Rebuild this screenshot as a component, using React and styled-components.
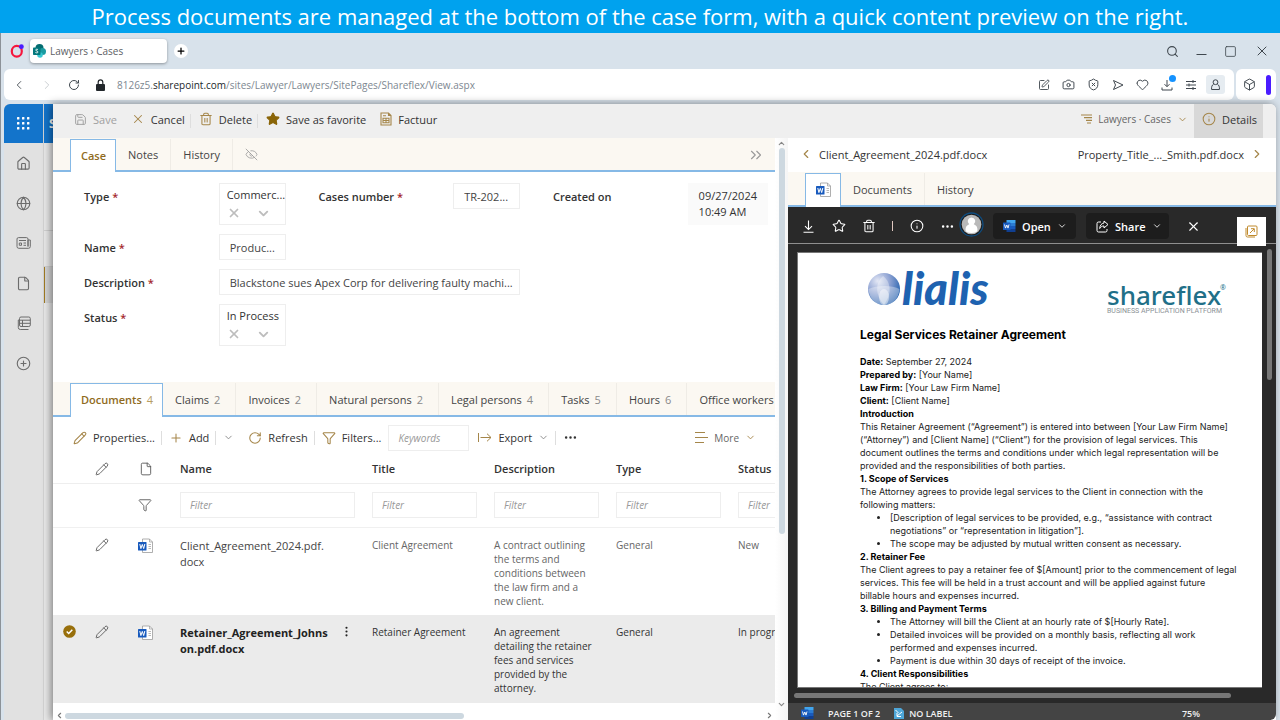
import React from "react";
import styled, { createGlobalStyle } from "styled-components";
import {
  Box,
  Camera,
  ChevronDown,
  ChevronLeft,
  ChevronRight,
  ChevronsRight,
  ChevronUp,
  CirclePlus,
  Ellipsis,
  EllipsisVertical,
  EyeOff,
  File,
  Funnel,
  Globe,
  Heart,
  House,
  Info,
  Pencil,
  Plus,
  RotateCw,
  Save,
  Search,
  ShieldX,
  Square,
  SquarePen,
  Star,
  Trash2,
  X
} from "lucide-react";

const gold = "#a5864a";
const blueLine = "#86b9e6";

const GlobalStyle = createGlobalStyle`
  * {
    box-sizing: border-box;
  }
  body {
    margin: 0;
    font-family: "Open Sans", "Noto Sans", sans-serif;
    font-size: 11px;
    color: #333333;
  }
  button, input, select {
    font: inherit;
    color: inherit;
    margin: 0;
    padding: 0;
    border: none;
    background: none;
    outline: none;
  }
  a {
    color: inherit;
    text-decoration: none;
  }
  svg {
    display: block;
    flex-shrink: 0;
    overflow: visible;
  }
`;

const Page = styled.div`
  display: flex;
  flex-direction: column;
  height: 100vh;
  overflow: hidden;
  background-color: #d8e2eb;
`;

const Banner = styled.h1`
  margin: 0;
  flex-shrink: 0;
  height: 33px;
  line-height: 32px;
  text-align: center;
  white-space: nowrap;
  font-size: 22px;
  font-weight: 400;
  color: #ffffff;
  background-color: #00a2ee;
`;

/* browser frame */

const TabStrip = styled.div`
  display: flex;
  align-items: center;
  flex-shrink: 0;
  height: 36px;
  padding: 0 10px 0 9px;
  border-left: 1px solid #8c9298;
`;

const BrowserTab = styled.button`
  display: flex;
  align-items: center;
  gap: 4px;
  width: 137px;
  height: 24px;
  margin-left: 6px;
  padding-left: 3px;
  border-radius: 4px;
  background-color: #ffffff;
  box-shadow: 0 1px 3px rgba(0, 0, 0, 0.35);
  font-size: 10px;
  color: #5c6064;
`;

const NewTab = styled.button`
  display: grid;
  place-items: center;
  width: 14px;
  height: 14px;
  margin-left: 7px;
  border-radius: 50%;
  color: #000000;
  background-color: #ffffff;
`;

const WindowButtons = styled.div`
  display: flex;
  align-items: center;
  gap: 17px;
  margin-left: auto;
  color: #3f474e;
`;

const AddressRow = styled.div`
  display: flex;
  gap: 2px;
  flex-shrink: 0;
  height: 35px;
  padding: 0 4px 4px 3px;
  border-left: 1px solid #8c9298;
`;

const AddressBar = styled.div`
  display: flex;
  align-items: center;
  flex: 1;
  padding: 0 8px;
  border-radius: 6px;
  background-color: #ffffff;
`;

const AddressExtra = styled.div`
  display: flex;
  align-items: center;
  justify-content: space-between;
  width: 40px;
  padding: 0 5px 0 7px;
  border-radius: 6px;
  color: #3f474e;
  background-color: #ffffff;
`;

const PurpleMark = styled.div`
  width: 5px;
  height: 20px;
  border-radius: 3px;
  background-color: #4a1cff;
`;

const NavButton = styled.button`
  width: 12px;
  margin-right: 16px;
  color: ${props => (props.$faded ? "#c3c8cc" : "#3f474e")};
`;

const Url = styled.a`
  margin-left: 12px;
  flex: 1;
  white-space: nowrap;
  font-size: 10px;
  color: #7d8791;
  b {
    font-weight: 400;
    color: #22272b;
  }
`;

const BrowserTools = styled.div`
  display: flex;
  align-items: center;
  gap: 12px;
  color: #3f474e;
`;

const DownloadButton = styled.button`
  position: relative;
`;

const BlueDot = styled.span`
  position: absolute;
  right: -3px;
  top: -4px;
  width: 7px;
  height: 7px;
  border-radius: 50%;
  background-color: #1592ff;
`;

const Profile = styled.button`
  display: grid;
  place-items: center;
  width: 19px;
  height: 19px;
  margin: 0 1px 0 -3px;
  border-radius: 3px;
  background-color: #e6ecf1;
`;

/* SharePoint page */

const Main = styled.div`
  display: flex;
  flex: 1;
  min-height: 0;
  padding: 0 4px 0 3px;
  border-left: 1px solid #8c9298;
`;

const Rail = styled.nav`
  display: flex;
  flex-direction: column;
  flex-shrink: 0;
  width: 39px;
  color: #6c6c6c;
  background-color: #e1e1e1;
`;

const Waffle = styled.button`
  display: grid;
  place-items: center;
  height: 39px;
  border-radius: 6px 0 0 0;
  background-color: #1374cb;
`;

const RailButton = styled.button`
  display: grid;
  place-items: center;
  height: 40px;
`;

const Gutter = styled.div`
  display: flex;
  flex-direction: column;
  flex-shrink: 0;
  width: 10px;
  overflow: hidden;
  border-left: 1px solid #d2d2d2;
  background-color: #e8e8e8;
`;

const GutterHead = styled.div`
  height: 39px;
  margin-left: -1px;
  padding-left: 6px;
  line-height: 38px;
  font-size: 13px;
  font-weight: 700;
  color: #ffffff;
  background-color: #1374cb;
`;

const GutterSpace = styled.div`
  height: ${props => props.$height}px;
  border-bottom: 1px solid #d0d0d0;
`;

const GutterMark = styled.div`
  height: 36px;
  margin-left: -1px;
  border-left: 2px solid #a07a20;
  background-color: #d6d6d6;
`;

const Panel = styled.main`
  display: flex;
  flex-direction: column;
  flex: 1;
  min-width: 0;
  position: relative;
  border-radius: 0 6px 0 0;
  background-color: #ffffff;
  box-shadow: -2px 0 9px rgba(0, 0, 0, 0.45);
`;

const TopBar = styled.div`
  display: flex;
  flex-shrink: 0;
  height: 34px;
  padding: 0 13px;
  border-radius: 0 6px 0 0;
  background-color: #efefef;
`;

const ToolButton = styled.button`
  display: flex;
  align-items: center;
  gap: 6px;
  padding: 0 6px 4px 8px;
  white-space: nowrap;
  position: relative;
  font-size: ${props => (props.$small ? 10 : 11)}px;
  color: ${props => props.$color || "#333333"};
  background-color: ${props => (props.$active ? "#d8d8d8" : "transparent")};
  svg {
    color: ${props => props.$icon || gold};
  }
  &::after {
    content: "";
    display: ${props => (props.$divided ? "block" : "none")};
    position: absolute;
    right: 0;
    top: 50%;
    height: 14px;
    margin-top: -7px;
    border-right: 1px solid #dedede;
  }
`;

const Spacer = styled.div`
  flex: 1;
`;

const Columns = styled.div`
  display: flex;
  flex: 1;
  min-height: 0;
`;

const CaseColumn = styled.section`
  display: flex;
  flex: 1;
  min-width: 0;
`;

const CaseBody = styled.div`
  display: flex;
  flex-direction: column;
  flex: 1;
  min-width: 0;
`;

const Tabs = styled.div`
  display: flex;
  flex-shrink: 0;
  height: ${props => props.$height || 34}px;
  padding: 1px 0 0 17px;
  overflow: hidden;
  box-shadow: inset 0 -2px 0 ${blueLine};
  background-color: #fbf8f2;
`;

const Tab = styled.button`
  display: flex;
  align-items: center;
  flex-shrink: 0;
  gap: 5px;
  padding: 0 ${props => props.$end || 12}px 0 12px;
  white-space: nowrap;
  border-right: 1px solid ${props => (props.$last ? "transparent" : "#efece6")};
  margin-bottom: 2px;
  color: #444444;
  svg {
    color: #999999;
  }
  span {
    color: #8a8a8a;
  }
`;

const ActiveTab = styled(Tab)`
  padding: 0 9px 2px 10px;
  margin: 0;
  border: 1px solid ${blueLine};
  border-bottom: none;
  font-weight: 600;
  color: #8f6b1d;
  background-color: #ffffff;
  span {
    font-weight: 400;
    color: #b79d63;
  }
`;

const Form = styled.form`
  display: grid;
  grid-template-columns: 135fr 67fr 33fr 135fr 67fr 33fr 135fr 80fr;
  grid-auto-rows: min-content;
  row-gap: 9px;
  flex-shrink: 0;
  height: 210px;
  padding: 11px 7px 0 31px;
`;

const Label = styled.label`
  grid-column: ${props => props.$column || 1};
  padding-top: 6px;
  font-weight: 600;
  line-height: 15px;
  color: #333333;
  em {
    color: #a4262c;
    font-style: normal;
  }
`;

const Field = styled.input`
  grid-column: ${props => props.$column || 2};
  align-self: start;
  min-width: 0;
  width: 100%;
  height: 26px;
  padding-left: 10px;
  border: 1px solid #eeeeee;
  text-overflow: ellipsis;
  color: #444444;
`;

const Choice = styled.div`
  display: grid;
  grid-template-columns: 1fr 1fr;
  align-content: start;
  height: 42px;
  padding: 2px 0 0 7px;
  overflow: hidden;
  border: 1px solid #eeeeee;
  color: #bdbdbd;
  select {
    grid-column: 1 / 3;
    width: 100%;
    height: 16px;
    appearance: none;
    color: #333333;
  }
  button {
    height: 22px;
  }
`;

const Stamp = styled.output`
  grid-column: 8;
  padding: 5px 11px;
  line-height: 16px;
  white-space: nowrap;
  background-color: #fafafa;
`;

const ListBar = styled.div`
  display: flex;
  align-items: center;
  flex-shrink: 0;
  height: 41px;
  padding: 0 12px 0 13px;
`;

const ListButton = styled(ToolButton)`
  height: 28px;
  padding: 0 7px;
`;

const Keywords = styled.input`
  width: 81px;
  height: 26px;
  margin-right: 2px;
  padding-left: 9px;
  border: 1px solid #eeeeee;
  font-size: 10px;
  font-style: italic;
  &::placeholder {
    color: #999999;
  }
`;

const TableWrap = styled.div`
  flex: 1;
  min-height: 0;
  overflow: hidden;
`;

const Table = styled.table`
  width: 799px;
  table-layout: fixed;
  border-collapse: collapse;
`;

const HeadCell = styled.th`
  height: 25px;
  padding: 0 8px;
  text-align: left;
  vertical-align: top;
  line-height: 22px;
  font-weight: 600;
  border-bottom: 1px solid #eeeeee;
  svg {
    margin: 4px auto 0;
    color: #555555;
  }
`;

const FilterCell = styled.td`
  height: 44px;
  padding: 0 9px 0 8px;
  border-bottom: 1px solid #f0f0f0;
  svg {
    margin: 0 auto;
    color: #555555;
  }
`;

const FilterInput = styled.input`
  width: 100%;
  height: 26px;
  padding-left: 9px;
  border: 1px solid #eeeeee;
  font-size: 10px;
  font-style: italic;
  &::placeholder {
    color: #999999;
  }
`;

const Row = styled.tr`
  height: 88px;
  font-weight: ${props => (props.$selected ? 700 : 400)};
  color: ${props => (props.$selected ? "#222222" : "#444444")};
  background-color: ${props => (props.$selected ? "#ebebeb" : "#ffffff")};
`;

const Cell = styled.td`
  padding: ${props => (props.$icon ? "10px 0 0" : "10px 8px 0")};
  vertical-align: top;
  font-size: 10px;
  line-height: 14px;
  white-space: nowrap;
  font-weight: 400;
  color: ${props => (props.$dark ? "#333333" : "#666666")};
  svg {
    margin: 0 auto;
    color: #555555;
  }
`;

const NameCell = styled.td`
  padding: 10px 8px 0;
  vertical-align: top;
  line-height: 16px;
  white-space: nowrap;
`;

const NameRow = styled.div`
  display: flex;
  justify-content: space-between;
  padding-right: 3px;
`;

const HScroll = styled.div`
  display: flex;
  align-items: center;
  flex-shrink: 0;
  height: 17px;
  padding: 8px 1px 0 2px;
  color: #777777;
`;

const HTrack = styled.div`
  flex: 1;
  margin-left: 1px;
`;

const HThumb = styled.div`
  width: 57%;
  height: 6px;
  border-radius: 3px;
  background-color: #cdd8e0;
`;

const VScroll = styled.div`
  display: flex;
  flex-direction: column;
  align-items: center;
  justify-content: space-between;
  width: 13px;
  padding: 1px 0 11px;
  color: #888888;
  background: linear-gradient(to right, #ffffff, #f5f5f5);
`;

const VTrack = styled.div`
  flex: 1;
`;

const VThumb = styled.div`
  width: 6px;
  height: 70%;
  border-radius: 3px;
  background-color: #cdd8e0;
`;

/* preview */

const Preview = styled.section`
  display: flex;
  flex-direction: column;
  flex: 0 0 488px;
  min-width: 0;
  position: relative;
`;

const PreviewNav = styled.div`
  display: flex;
  align-items: center;
  justify-content: space-between;
  flex-shrink: 0;
  height: 34px;
  padding: 0 12px 2px 11px;
  background-color: #ffffff;
  a {
    display: flex;
    align-items: center;
    gap: 6px;
  }
  svg {
    color: ${gold};
  }
`;

const DarkBar = styled.div`
  display: flex;
  align-items: center;
  flex-shrink: 0;
  height: 37px;
  padding: 2px 15px 0 14px;
  border-bottom: 1px solid #8f8f8f;
  color: #ffffff;
  background-color: #292929;
`;

const DarkIcon = styled.button`
  display: grid;
  place-items: center;
  width: 13px;
  height: 20px;
  margin-right: ${props => props.$end || 17}px;
`;

const Bar = styled.span`
  width: 1px;
  height: 10px;
  margin-right: 17px;
  background-color: #e0c8c0;
`;

const DarkButton = styled.button`
  display: flex;
  align-items: center;
  gap: 6px;
  width: 83px;
  height: 26px;
  margin-right: 10px;
  padding-left: 10px;
  border-radius: 4px;
  font-weight: 600;
  background-color: #1d1d1d;
`;

const AvatarButton = styled.button`
  margin: 0 9px 4px 0;
`;

const Popout = styled.button`
  position: absolute;
  right: 10px;
  top: 79px;
  display: grid;
  place-items: center;
  width: 29px;
  height: 29px;
  color: #c08a2c;
  background-color: #ffffff;
`;

const Viewer = styled.div`
  display: flex;
  flex: 1;
  min-height: 0;
  padding: 8px 4px 0 9px;
  background-color: #292929;
`;

const Paper = styled.article`
  flex: 1;
  min-width: 0;
  overflow: hidden;
  padding: 16px 20px 0 62px;
  white-space: nowrap;
  border: 1px solid #777777;
  border-right: none;
  font-family: Inter, "Liberation Sans", sans-serif;
  font-size: 9px;
  line-height: 13px;
  color: #222222;
  background-color: #ffffff;
  b {
    color: #000000;
  }
  p {
    margin: 0;
  }
  h2 {
    margin: 9px 0 13px;
    font-size: 12px;
    line-height: 14px;
    color: #000000;
  }
  h3 {
    margin: 0;
    font-size: 9px;
    line-height: 13px;
    color: #000000;
  }
  ul {
    margin: 0;
    padding-left: 30px;
  }
`;

const Logos = styled.div`
  display: flex;
  justify-content: space-between;
  margin-right: 15px;
`;

const ViewerScroll = styled.div`
  width: 5px;
  height: 131px;
  margin: -3px 0 0 5px;
  border-radius: 3px;
  background-color: #777777;
`;

const ViewerHScroll = styled.div`
  flex-shrink: 0;
  height: 15px;
  padding: 5px 45px 0 6px;
  background-color: #292929;
  div {
    height: 5px;
    border-radius: 3px;
    background-color: #777777;
  }
`;

const StatusBar = styled.div`
  display: flex;
  align-items: center;
  flex-shrink: 0;
  height: 17px;
  padding: 3px 76px 0 13px;
  font-size: 9px;
  font-weight: 600;
  color: #f0f0f0;
  background-color: #444444;
  border-radius: 0 0 6px 0;
  svg {
    margin-right: 5px;
  }
  span {
    margin: 0 14px 0 9px;
  }
`;

const WordFile = () => (
  <svg width="15" height="15" viewBox="0 0 15 15" aria-hidden="true">
    <path d="M4.5 1h7l3 3v10.5h-10z" fill="#ffffff" stroke="#9a9a9a" strokeWidth="0.8" />
    <path d="M11.5 1v3h3M10.5 6.5h2.5M10.5 8.5h2.5M10.5 10.5h2.5" fill="none" stroke="#9a9a9a" strokeWidth="0.7" />
    <rect x="0" y="4" width="8.5" height="8.5" rx="0.6" fill="#185abd" />
    <path d="M1.8 6l1.1 4.6L4.3 6.4l1.4 4.2L6.8 6" fill="none" stroke="#ffffff" strokeWidth="1" />
  </svg>
);

const WordLogo = () => (
  <svg width="13" height="12" viewBox="0 0 13 12" aria-hidden="true">
    <path d="M3.5 0h9v3h-9z" fill="#41a5ee" />
    <path d="M3.5 3h9v3h-9z" fill="#2b7cd3" />
    <path d="M3.5 6h9v3h-9z" fill="#185abd" />
    <path d="M3.5 9h9v3h-9z" fill="#103f91" />
    <rect y="2.5" width="7.5" height="7.5" rx="0.6" fill="#185abd" />
    <path d="M1.5 4.5l1 3.6L3.8 5l1.2 3.1 1-3.6" fill="none" stroke="#ffffff" strokeWidth="0.9" />
  </svg>
);

const OperaIcon = () => (
  <svg width="14" height="14" viewBox="0 0 14 14">
    <ellipse cx="6.8" cy="7.2" rx="5" ry="5.4" fill="none" stroke="#f5173d" strokeWidth="2.2" />
    <circle cx="11.4" cy="2.7" r="2.4" fill="#4a1cff" />
  </svg>
);

const SharePointIcon = () => (
  <svg width="13" height="14" viewBox="0 0 13 14">
    <circle cx="6.5" cy="4" r="4" fill="#036c70" />
    <circle cx="9.5" cy="7.5" r="3.5" fill="#1a9ba1" />
    <circle cx="7" cy="11" r="2.8" fill="#37c6d0" />
    <rect y="3.5" width="7.5" height="7.5" rx="0.8" fill="#03787c" />
    <path d="M5 5.6C4 5 2.6 5.2 2.7 6.1c.1 1 2.3.8 2.3 1.9 0 1-1.5 1.1-2.6.5" fill="none" stroke="#fff" strokeWidth="0.9" />
  </svg>
);

const LockIcon = () => (
  <svg width="9" height="12" viewBox="0 0 9 12">
    <rect y="5" width="9" height="7" rx="1" fill="#22272b" />
    <path d="M2.2 5V3.2a2.3 2.3 0 0 1 4.6 0V5" fill="none" stroke="#22272b" strokeWidth="1.2" />
  </svg>
);

const WaffleIcon = () => (
  <svg width="13" height="13" viewBox="0 0 13 13" fill="#ffffff">
    {[0, 5, 10].map(y =>
      [0, 5, 10].map(x => <rect key={x + "-" + y} x={x} y={y} width="2.4" height="2.4" rx="0.5" />)
    )}
  </svg>
);

const NewsIcon = () => (
  <svg width="15" height="12" viewBox="0 0 15 12" fill="none" stroke="currentColor">
    <path d="M12 9.5V2A1.5 1.5 0 0 0 10.5 0.6h-8A1.5 1.5 0 0 0 1 2v7.5a1.8 1.8 0 0 0 1.8 1.8h9.7a1.8 1.8 0 0 0 1.8-1.8V3H12M12 3v6.5" />
    <path d="M3 3.5h7M7.5 6h2.5M7.5 8.3h2.5M3.3 6h2.2v2.3H3.3z" />
  </svg>
);

const SendIcon = () => (
  <svg width="12" height="12" viewBox="0 0 12 12" fill="none" stroke="currentColor" strokeLinejoin="round">
    <path d="M1.5 1.5L11 6 1.5 10.5 3.5 6z" />
  </svg>
);

const DownloadIcon = () => (
  <svg width="13" height="13" viewBox="0 0 13 13" fill="none" stroke="currentColor" strokeWidth="1.1">
    <path d="M6.5 0.5v9M3 6.2l3.5 3.4L10 6.2M1.5 12.3h10" />
  </svg>
);

const TrayIcon = () => (
  <svg width="12" height="12" viewBox="0 0 12 12" fill="none" stroke="currentColor">
    <path d="M6 1v6.500M3.500 5.200L6 7.700l2.500-2.500M1 8.500v2.500h10V8.500" />
  </svg>
);

const SlidersIcon = () => (
  <svg width="12" height="12" viewBox="0 0 12 12" fill="none" stroke="currentColor">
    <path d="M1 2.5h10M1 6h10M1 9.5h10M8 1v3M4 4.5v3M8 8v3" />
  </svg>
);

const PersonIcon = () => (
  <svg width="11" height="12" viewBox="0 0 11 12" fill="none" stroke="currentColor">
    <circle cx="5.5" cy="3.2" r="2.4" />
    <path d="M3.7 5C2 6 1.3 8 1.6 10.5h7.8C9.7 8 9 6 7.3 5" />
  </svg>
);

const RowsIcon = () => (
  <svg width="14" height="14" viewBox="0 0 14 14" fill="none" stroke="currentColor">
    <rect x="2.5" y="1" width="10.8" height="9.5" rx="1.5" />
    <path d="M2.5 4h-1.2v7.5a2 2 0 0 0 2 2h8.2M2.5 4.2h10.8M2.5 7.3h10.8M5.5 4v6.5" />
  </svg>
);

const SortIcon = () => (
  <svg width="11" height="10" viewBox="0 0 11 10" fill="none" stroke="currentColor" strokeWidth="1.2">
    <path d="M0 1h11M3 3.7h8M5 6.4h6M6 9h4" />
  </svg>
);

const MoreIcon = () => (
  <svg width="13" height="13" viewBox="0 0 13 13" fill="none" stroke="currentColor">
    <path d="M0 1.5h10M0 6.5h13M0 11.5h9" />
  </svg>
);

const ExportIcon = () => (
  <svg width="14" height="11" viewBox="0 0 14 11" fill="none" stroke="currentColor">
    <path d="M0.5 1v9M2.5 5.5h10.5M9 1.7l4 3.8-4 3.8" />
  </svg>
);

const InvoiceIcon = () => (
  <svg width="12" height="14" viewBox="0 0 12 14" fill="none" stroke="currentColor" strokeWidth="1.1">
    <path d="M1 1h7.5L11 3.5V13H1zM8.5 1v2.5H11M3 6.2h6v4.6H3zM3 8.5h6M6 6.2v4.6M3 3.8h3" />
  </svg>
);

const ShareIcon = () => (
  <svg width="13" height="13" viewBox="0 0 13 13" fill="none" stroke="currentColor">
    <path d="M5 2H2.5A1.5 1.5 0 0 0 1 3.5v7A1.5 1.5 0 0 0 2.5 12h7a1.5 1.5 0 0 0 1.5-1.5V9" />
    <path d="M8 1l4 3.5L8 8V6C6 6 4.7 6.8 3.7 8.5 3.9 5.5 5.5 3.3 8 3z" />
  </svg>
);

const PopoutIcon = () => (
  <svg width="13" height="13" viewBox="0 0 13 13" fill="none" stroke="currentColor">
    <rect x="2.5" y="1" width="9.5" height="9.5" rx="1" />
    <path d="M1 3v7.5A1.5 1.5 0 0 0 2.5 12H10M5 8l4-4M6 3.7h3.3V7" />
  </svg>
);

const CheckedIcon = () => (
  <svg width="13" height="13" viewBox="0 0 13 13">
    <circle cx="6.5" cy="6.5" r="6.3" fill="#986f0b" />
    <path d="M3.7 6.5l2 2 3.6-3.8" fill="none" stroke="#ffffff" strokeWidth="1.5" />
  </svg>
);

const LabelIcon = () => (
  <svg width="10" height="11" viewBox="0 0 10 11">
    <path d="M0 0h7l3 3v8H0z" fill="#4ea6d8" />
    <path d="M1.5 2l3 3M3 8l5-4M3 5v3.5h4" fill="none" stroke="#ffffff" />
  </svg>
);

const Avatar = () => (
  <svg width="25" height="25" viewBox="0 0 25 25">
    <circle cx="12.5" cy="12.5" r="11.5" fill="#1d1d1d" stroke="#0f4d80" strokeWidth="1.3" />
    <circle cx="12.5" cy="12.5" r="9.8" fill="#b9b9b9" />
    <path d="M12.5 5.5a3.8 3.8 0 0 1 2.3 6.8c2.5 1 3.7 2.7 3.7 5.7 0 2-2 3-6 3s-6-1-6-3c0-3 1.2-4.7 3.7-5.7a3.8 3.8 0 0 1 2.3-6.8z" fill="#ffffff" />
  </svg>
);

const LialisLogo = () => (
  <svg width="140" height="50" viewBox="0 0 140 50">
    <defs>
      <radialGradient id="ball" cx="0.3" cy="0.25" r="0.85">
        <stop offset="0" stopColor="#e4e8f5" />
        <stop offset="0.45" stopColor="#8fa3d3" />
        <stop offset="1" stopColor="#1557a8" />
      </radialGradient>
    </defs>
    <circle cx="24" cy="20" r="16" fill="url(#ball)" />
    <path d="M8.5 20c8-4 24-4 31 0-1 10-7 16-15.500 16S9.5 30 8.5 20z" fill="#ffffff" opacity="0.35" />
    <path d="M23 7c7 5 10 16 1 29-9-10-9-22-1-29z" fill="#ffffff" opacity="0.35" />
    <ellipse cx="24" cy="28" rx="5" ry="8" fill="#ffffff" opacity="0.45" />
    <text x="42" y="36" fontFamily="Lato, sans-serif" fontSize="45" fontWeight="900" fontStyle="italic" fill="#1e62b0">
      lialis
    </text>
  </svg>
);

const ShareflexLogo = () => (
  <svg width="120" height="50" viewBox="0 0 120 50">
    <text x="0" y="36" fontFamily="Noto Sans, sans-serif" fontSize="26" fontWeight="500" fill="#216f88">
      shareflex
    </text>
    <text x="113" y="21" fontFamily="Noto Sans, sans-serif" fontSize="7" fill="#216f88">
      ®
    </text>
    <text x="0" y="44" fontFamily="Roboto, sans-serif" fontSize="7" fill="#8b9196">
      BUSINESS APPLICATION PLATFORM
    </text>
  </svg>
);

const relatedTabs = [
  ["Claims", 2],
  ["Invoices", 2],
  ["Natural persons", 2],
  ["Legal persons", 4],
  ["Tasks", 5],
  ["Hours", 6]
];

const filters = ["Name", "Title", "Description", "Type", "Status"];

const documents = [
  {
    name: ["Client_Agreement_2024.pdf.", "docx"],
    title: "Client Agreement",
    description: ["A contract outlining", "the terms and", "conditions between", "the law firm and a", "new client."],
    type: "General",
    status: "New"
  },
  {
    name: ["Retainer_Agreement_Johns", "on.pdf.docx"],
    title: "Retainer Agreement",
    description: ["An agreement", "detailing the retainer", "fees and services", "provided by the", "attorney."],
    type: "General",
    status: "In progress",
    selected: true
  }
];

const Lines = ({ items }) =>
  items.map(line => (
    <React.Fragment key={line}>
      {line}
      <br />
    </React.Fragment>
  ));

const ChoiceField = ({ id, value }) => (
  <Choice>
    <select id={id} defaultValue={value}>
      <option>{value}</option>
    </select>
    <button type="button" aria-label="Clear">
      <X size={14} strokeWidth={3} />
    </button>
    <button type="button" aria-label="Open list">
      <ChevronDown size={15} strokeWidth={3} />
    </button>
  </Choice>
);

const Browser = () => (
  <>
    <TabStrip>
      <OperaIcon />
      <BrowserTab>
        <SharePointIcon />
        Lawyers › Cases
      </BrowserTab>
      <NewTab aria-label="New tab">
        <Plus size={10} strokeWidth={3} />
      </NewTab>
      <WindowButtons>
        <button aria-label="Search">
          <Search size={13} strokeWidth={2} />
        </button>
        <button aria-label="Minimize">
          <svg width="11" height="12" viewBox="0 0 11 12">
            <path d="M0.5 9.5h10" stroke="currentColor" />
          </svg>
        </button>
        <button aria-label="Maximize">
          <Square size={13} strokeWidth={1.5} />
        </button>
        <button aria-label="Close">
          <X size={16} strokeWidth={1.5} />
        </button>
      </WindowButtons>
    </TabStrip>
    <AddressRow>
      <AddressBar>
        <NavButton aria-label="Back">
          <ChevronLeft size={14} strokeWidth={1.5} />
        </NavButton>
        <NavButton aria-label="Forward" $faded>
          <ChevronRight size={14} strokeWidth={1.5} />
        </NavButton>
        <NavButton aria-label="Reload">
          <RotateCw size={12} strokeWidth={2} />
        </NavButton>
        <LockIcon />
        <Url href="#">
          8126z5.<b>sharepoint.com</b>/sites/Lawyer/Lawyers/SitePages/Shareflex/View.aspx
        </Url>
        <BrowserTools>
          <SquarePen size={12} strokeWidth={1.8} />
          <Camera size={13} strokeWidth={1.8} />
          <ShieldX size={13} strokeWidth={1.8} />
          <SendIcon />
          <Heart size={13} strokeWidth={1.8} />
          <DownloadButton aria-label="Downloads">
            <TrayIcon />
            <BlueDot />
          </DownloadButton>
          <SlidersIcon />
          <Profile aria-label="Profile">
            <PersonIcon />
          </Profile>
        </BrowserTools>
      </AddressBar>
      <AddressExtra>
        <Box size={13} strokeWidth={1.8} />
        <PurpleMark />
      </AddressExtra>
    </AddressRow>
  </>
);

const CaseForm = () => (
  <Form>
    <Label htmlFor="type">
      Type <em>*</em>
    </Label>
    <ChoiceField id="type" value="Commerc..." />
    <Label htmlFor="number" $column={4}>
      Cases number <em>*</em>
    </Label>
    <Field id="number" $column={5} defaultValue="TR-202..." />
    <Label htmlFor="created" $column={7}>
      Created on
    </Label>
    <Stamp id="created">
      09/27/2024
      <br />
      10:49 AM
    </Stamp>
    <Label htmlFor="name">
      Name <em>*</em>
    </Label>
    <Field id="name" defaultValue="Produc..." />
    <Label htmlFor="description">
      Description <em>*</em>
    </Label>
    <Field id="description" $column="2 / span 4" defaultValue="Blackstone sues Apex Corp for delivering faulty machi..." />
    <Label htmlFor="status">
      Status <em>*</em>
    </Label>
    <ChoiceField id="status" value="In Process" />
  </Form>
);

const DocumentTable = () => (
  <TableWrap>
    <Table>
      <colgroup>
        {[32, 34, 53, 192, 122, 122, 122, 122].map((width, i) => (
          <col key={i} width={width} />
        ))}
      </colgroup>
      <thead>
        <tr>
          <HeadCell />
          <HeadCell>
            <Pencil size={14} strokeWidth={1.5} />
          </HeadCell>
          <HeadCell>
            <File size={14} strokeWidth={1.5} />
          </HeadCell>
          {filters.map(name => (
            <HeadCell key={name}>{name}</HeadCell>
          ))}
        </tr>
      </thead>
      <tbody>
        <tr>
          <FilterCell colSpan={2} />
          <FilterCell>
            <Funnel size={14} strokeWidth={1.5} />
          </FilterCell>
          {filters.map(name => (
            <FilterCell key={name}>
              <FilterInput placeholder="Filter" aria-label={"Filter " + name} />
            </FilterCell>
          ))}
        </tr>
        {documents.map(doc => (
          <Row key={doc.title} $selected={doc.selected}>
            <Cell $icon>{doc.selected && <CheckedIcon />}</Cell>
            <Cell $icon>
              <Pencil size={14} strokeWidth={1.5} />
            </Cell>
            <Cell $icon>
              <WordFile />
            </Cell>
            <NameCell>
              <NameRow>
                <div>
                  <Lines items={doc.name} />
                </div>
                {doc.selected && <EllipsisVertical size={13} />}
              </NameRow>
            </NameCell>
            <Cell $dark={doc.selected}>{doc.title}</Cell>
            <Cell $dark={doc.selected}>
              <Lines items={doc.description} />
            </Cell>
            <Cell $dark={doc.selected}>{doc.type}</Cell>
            <Cell $dark={doc.selected}>{doc.status}</Cell>
          </Row>
        ))}
      </tbody>
    </Table>
  </TableWrap>
);

const Agreement = () => (
  <Paper>
    <Logos>
      <LialisLogo />
      <ShareflexLogo />
    </Logos>
    <h2>Legal Services Retainer Agreement</h2>
    <p>
      <b>Date:</b> September 27, 2024
      <br />
      <b>Prepared by:</b> [Your Name]
      <br />
      <b>Law Firm:</b> [Your Law Firm Name]
      <br />
      <b>Client:</b> [Client Name]
    </p>
    <h3>Introduction</h3>
    <p>
      This Retainer Agreement (“Agreement”) is entered into between [Your Law Firm Name]
      <br />
      (“Attorney”) and [Client Name] (“Client”) for the provision of legal services. This
      <br />
      document outlines the terms and conditions under which legal representation will be
      <br />
      provided and the responsibilities of both parties.
    </p>
    <h3>1. Scope of Services</h3>
    <p>
      The Attorney agrees to provide legal services to the Client in connection with the
      <br />
      following matters:
    </p>
    <ul>
      <li>
        [Description of legal services to be provided, e.g., “assistance with contract
        <br />
        negotiations” or “representation in litigation”].
      </li>
      <li>The scope may be adjusted by mutual written consent as necessary.</li>
    </ul>
    <h3>2. Retainer Fee</h3>
    <p>
      The Client agrees to pay a retainer fee of $[Amount] prior to the commencement of legal
      <br />
      services. This fee will be held in a trust account and will be applied against future
      <br />
      billable hours and expenses incurred.
    </p>
    <h3>3. Billing and Payment Terms</h3>
    <ul>
      <li>The Attorney will bill the Client at an hourly rate of $[Hourly Rate].</li>
      <li>
        Detailed invoices will be provided on a monthly basis, reflecting all work
        <br />
        performed and expenses incurred.
      </li>
      <li>Payment is due within 30 days of receipt of the invoice.</li>
    </ul>
    <h3>4. Client Responsibilities</h3>
    <p>The Client agrees to:</p>
  </Paper>
);

const App = () => (
  <Page>
    <GlobalStyle />
    <Banner>Process documents are managed at the bottom of the case form, with a quick content preview on the right.</Banner>
    <Browser />
    <Main>
      <Rail>
        <Waffle aria-label="App launcher">
          <WaffleIcon />
        </Waffle>
        <RailButton aria-label="Home">
          <House size={15} strokeWidth={1.8} />
        </RailButton>
        <RailButton aria-label="Sites">
          <Globe size={15} strokeWidth={1.8} />
        </RailButton>
        <RailButton aria-label="News">
          <NewsIcon />
        </RailButton>
        <RailButton aria-label="Files">
          <File size={15} strokeWidth={1.8} />
        </RailButton>
        <RailButton aria-label="Lists">
          <RowsIcon />
        </RailButton>
        <RailButton aria-label="Create">
          <CirclePlus size={15} strokeWidth={1.8} />
        </RailButton>
      </Rail>
      <Gutter>
        <GutterHead>S</GutterHead>
        <GutterSpace $height={88} />
        <GutterSpace $height={36} />
        <GutterMark />
      </Gutter>
      <Panel>
        <TopBar>
          <ToolButton $color="#a0a0a0" $icon="#a0a0a0">
            <Save size={13} strokeWidth={1.8} />
            Save
          </ToolButton>
          <ToolButton $divided>
            <X size={14} strokeWidth={1.8} />
            Cancel
          </ToolButton>
          <ToolButton $divided>
            <Trash2 size={14} strokeWidth={1.8} />
            Delete
          </ToolButton>
          <ToolButton $icon="#8a6508">
            <Star size={14} fill="currentColor" />
            Save as favorite
          </ToolButton>
          <ToolButton>
            <InvoiceIcon />
            Factuur
          </ToolButton>
          <Spacer />
          <ToolButton $small $color="#666666">
            <SortIcon />
            Lawyers · Cases
            <ChevronDown size={11} />
          </ToolButton>
          <ToolButton $active>
            <Info size={14} strokeWidth={1.8} />
            Details
          </ToolButton>
        </TopBar>
        <Columns>
          <CaseColumn>
            <CaseBody>
              <Tabs>
                <ActiveTab>Case</ActiveTab>
                <Tab>Notes</Tab>
                <Tab>History</Tab>
                <Tab $last aria-label="Hidden tabs">
                  <EyeOff size={13} strokeWidth={1.5} />
                </Tab>
                <Spacer />
                <Tab $last $end={9} aria-label="Collapse">
                  <ChevronsRight size={18} strokeWidth={1.5} />
                </Tab>
              </Tabs>
              <CaseForm />
              <Tabs $height={35}>
                <ActiveTab>
                  Documents <span>4</span>
                </ActiveTab>
                {relatedTabs.map(([name, count]) => (
                  <Tab key={name} $end={15}>
                    {name} <span>{count}</span>
                  </Tab>
                ))}
                <Tab $last $end={1}>
                  Office workers
                </Tab>
              </Tabs>
              <ListBar>
                <ListButton $divided>
                  <Pencil size={14} strokeWidth={1.8} />
                  Properties...
                </ListButton>
                <ListButton $divided>
                  <Plus size={14} strokeWidth={1.8} />
                  Add
                </ListButton>
                <ListButton $icon="#888888" aria-label="Add options">
                  <ChevronDown size={11} />
                </ListButton>
                <ListButton $divided>
                  <RotateCw size={14} strokeWidth={1.8} />
                  Refresh
                </ListButton>
                <ListButton>
                  <Funnel size={14} strokeWidth={1.8} />
                  Filters...
                </ListButton>
                <Keywords placeholder="Keywords" aria-label="Keywords" />
                <ListButton $divided>
                  <ExportIcon />
                  Export
                  <ChevronDown size={11} color="#888888" />
                </ListButton>
                <ListButton $icon="#333333" aria-label="More actions">
                  <Ellipsis size={15} />
                </ListButton>
                <Spacer />
                <ListButton $small $color="#666666">
                  <MoreIcon />
                  More
                  <ChevronDown size={11} />
                </ListButton>
              </ListBar>
              <DocumentTable />
              <HScroll>
                <ChevronLeft size={9} strokeWidth={3} />
                <HTrack>
                  <HThumb />
                </HTrack>
                <ChevronRight size={9} strokeWidth={3} />
              </HScroll>
            </CaseBody>
            <VScroll>
              <ChevronUp size={9} strokeWidth={3} />
              <VTrack>
                <VThumb />
              </VTrack>
              <ChevronDown size={9} strokeWidth={3} />
            </VScroll>
          </CaseColumn>
          <Preview>
            <PreviewNav>
              <a href="#previous">
                <ChevronLeft size={14} />
                Client_Agreement_2024.pdf.docx
              </a>
              <a href="#next">
                Property_Title_..._Smith.pdf.docx
                <ChevronRight size={14} />
              </a>
            </PreviewNav>
            <Tabs $height={35}>
              <ActiveTab aria-label="Preview">
                <WordFile />
              </ActiveTab>
              <Tab>Documents</Tab>
              <Tab $last>History</Tab>
            </Tabs>
            <DarkBar>
              <DarkIcon aria-label="Download">
                <DownloadIcon />
              </DarkIcon>
              <DarkIcon aria-label="Favorite">
                <Star size={14} strokeWidth={1.8} />
              </DarkIcon>
              <DarkIcon aria-label="Delete">
                <Trash2 size={14} strokeWidth={1.8} />
              </DarkIcon>
              <Bar />
              <DarkIcon aria-label="Info">
                <Info size={14} strokeWidth={1.8} />
              </DarkIcon>
              <DarkIcon aria-label="More" $end={6}>
                <Ellipsis size={15} />
              </DarkIcon>
              <AvatarButton aria-label="Account">
                <Avatar />
              </AvatarButton>
              <DarkButton>
                <WordLogo />
                Open
                <ChevronDown size={10} />
              </DarkButton>
              <DarkButton>
                <ShareIcon />
                Share
                <ChevronDown size={10} />
              </DarkButton>
              <Spacer />
              <DarkIcon aria-label="Close preview" $end={62}>
                <X size={15} strokeWidth={1.8} />
              </DarkIcon>
            </DarkBar>
            <Viewer>
              <Agreement />
              <ViewerScroll />
            </Viewer>
            <ViewerHScroll>
              <div />
            </ViewerHScroll>
            <StatusBar>
              <WordLogo />
              <span>PAGE 1 OF 2</span>
              <LabelIcon />
              NO LABEL
              <Spacer />
              75%
            </StatusBar>
            <Popout aria-label="Open in new window">
              <PopoutIcon />
            </Popout>
          </Preview>
        </Columns>
      </Panel>
    </Main>
  </Page>
);

export default App;
